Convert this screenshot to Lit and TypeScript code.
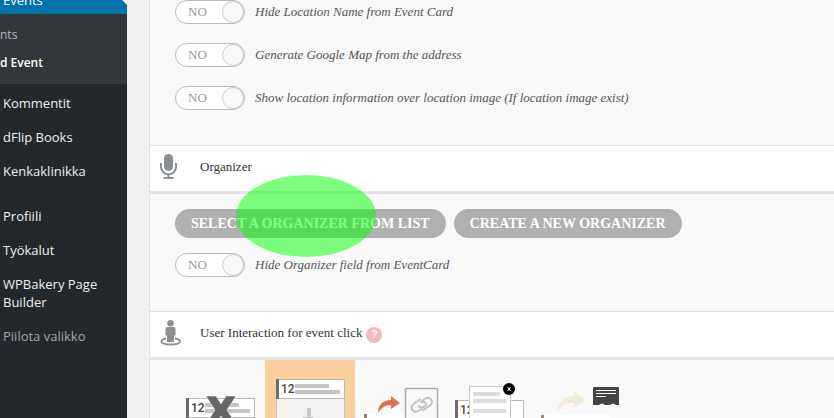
import { LitElement, html, css, svg } from "lit";
import { customElement, property } from "lit/decorators.js";

@customElement("side-menu")
class SideMenu extends LitElement {
  static styles = css`
    :host { display: block; background: #23282d; font: 13px/18px "Open Sans", "Noto Sans", sans-serif; }
    a { display: block; color: #eee; text-decoration: none; }
    .current { position: relative; display: flex; align-items: flex-end; height: 14px; padding: 0 3px; overflow: hidden; background: #0073aa; color: #fff; }
    .text { margin-bottom: 5px; }
    .arrow { position: absolute; top: 0; right: 0; width: 5px; height: 5px; background: #f1f1f1; clip-path: polygon(0 0, 100% 0, 100% 100%); }
    .sub { padding: 7px 0; margin-bottom: 2px; background: #32373c; font-size: 12px; }
    .sub a { padding: 5px 0; color: #b4b9be; }
    .sub .on { color: #fff; font-weight: 600; }
    .item { padding: 8px 3px; }
    .group { padding-bottom: 11px; }
    .fold { color: #a0a5aa; }
  `;
  render() {
    const item = (t: string) => html`<a class="item" href="#">${t}</a>`;
    return html`<nav>
      <a class="current" href="#"><span class="text">Events</span><span class="arrow"></span></a>
      <div class="sub"><a href="#">nts</a><a class="on" href="#">d Event</a></div>
      <div class="group">${["Kommentit", "dFlip Books", "Kenkaklinikka"].map(item)}</div>
      ${["Profiili", "Työkalut"].map(item)}
      <a class="item" href="#">WPBakery Page<br />Builder</a>
      <a class="item fold" href="#">Piilota valikko</a>
    </nav>`;
  }
}

@customElement("toggle-row")
class ToggleRow extends LitElement {
  @property() label = "";
  static styles = css`
    :host { display: block; }
    label { display: flex; align-items: center; gap: 10px; font-size: 13px; font-style: italic; color: #555; }
    .switch { display: flex; flex: none; align-items: center; justify-content: space-between; box-sizing: border-box; width: 70px; height: 24px; padding-left: 12px; border: 1px solid #bbb; border-radius: 12px; background: #fff; color: #999; font-size: 13px; font-style: normal; }
    input { appearance: none; box-sizing: border-box; width: 22px; height: 22px; margin: 0; border: 1px solid #ccc; border-radius: 50%; background: #f9f9f9; }
  `;
  render() {
    return html`<label><span class="switch">NO<input type="checkbox" role="switch" /></span><span>${this.label}</span></label>`;
  }
}

const mic = svg`<svg width="18" height="26" viewBox="0 0 18 26" fill="none" stroke="#8c8f91" stroke-width="2">
  <rect x="4" y="0" width="9" height="17" rx="4.5" fill="#8c8f91" stroke="none"/>
  <path d="M1 9v4a7.5 7.5 0 0 0 15 0V9M8.500 20.500v3M3.500 24h10"/></svg>`;

const person = svg`<svg width="22" height="26" viewBox="0 0 22 26" fill="#8c8f91">
  <circle cx="10.500" cy="3.300" r="3.300"/>
  <path d="M7.500 7h6a2 2 0 0 1 2 2v6.500h-1.500V22H7v-6.500H5.500V9a2 2 0 0 1 2-2z"/>
  <path d="M6 18.500c-7 1.200-6.500 6 4.500 6s12.500-4.800 4.500-6" fill="none" stroke="#8c8f91" stroke-width="1.800"/></svg>`;

const card = (x: number, y: number, h: number) => svg`
  <rect x=${x + 0.5} y=${y + 0.5} width="68" height=${h} fill="#fff" stroke="#b8b8b8"/>
  <rect x=${x} y=${y} width="3" height=${h + 1} fill="#6b6b6b"/>
  <text class="day" x=${x + 5} y=${y + 14}>12</text>`;

const bars = (x: number, y: number) => svg`
  <path d="M${x} ${y}h34v4h-34zM${x} ${y + 6}h45v4h-45z" fill="#c4c4c4"/>`;

const arrow = (x: number, y: number, scale: number, fill: string) => svg`
  <path transform="translate(${x} ${y}) scale(${scale})" fill=${fill} d="M0 17C0 9 5 4 13 4V0L22 7l-9 6V9C7 9 3 12 0 17z"/>`;

const choices = [
  { name: "Do nothing", art: svg`${card(11, 38, 19)}${bars(30, 43)}
    <path d="M31 36h10l5 8 5-8h10l-9 14 9 14H51l-5-8-5 8H31l9-14z" fill="#666" stroke="#fff" stroke-width=".5"/>` },
  { name: "Slide down", art: svg`<rect x="11.500" y="38.500" width="68" height="50" fill="#f3f3f3" stroke="#c4c4c4"/>
    ${card(11, 19, 19)}${bars(30, 24)}<path d="M42 48h4v9h3l-5 7-6-7h4z" fill="#c8c8c8"/>` },
  { name: "External link", art: svg`<rect x="9" y="54" width="50" height="30" fill="#fff"/>
    <rect x="9" y="54" width="3" height="30" fill="#a87861"/>
    ${arrow(23, 36, 1, "#d87550")}
    <rect x="50.500" y="28.500" width="32" height="40" rx="1" fill="#f9f9f9" stroke="#aaa" stroke-width="1.500"/>
    <g fill="none" stroke="#c2c2c2" stroke-width="2" stroke-linecap="round">
      <path d="M65 39.500l-6.500 4.500a4 4 0 0 0 4.500 7l3.500-2M63.500 46a4 4 0 0 0 5 1l2-1.500"/>
      <path d="M67.500 50.500l7.500-5a4 4 0 0 0-4.500-7l-3.500 2.500M71 44a4 4 0 0 0-5-2"/></g>` },
  { name: "Lightbox", art: svg`${card(10, 40, 19)}
    <rect x="24.500" y="26.500" width="41" height="60" fill="#fff" stroke="#c6c6c6"/>
    <path d="M28 32h27v4H28zM28 39h33v4H28zM28 49h33v4H28z" fill="#dcdcdc"/>
    <circle cx="64" cy="29" r="6" fill="#000"/>
    <path d="M62.500 27l3 4M65.500 27l-3 4" stroke="#fff"/>` },
  { name: "Single event page", art: svg`<rect x="6" y="55" width="69" height="30" rx="2" fill="#fff"/>
    <rect x="6" y="55" width="3" height="30" fill="#a38a78"/>
    ${arrow(22, 31, 1.3, "#f1ebdc")}
    <path d="M59 27h24q1 0 1 1v17h-3q-3-3-6 0h-5q-3-3-6 0h-6V28q0-1 1-1z" fill="#444"/>
    <path d="M61 30.500h20M61 33.500h20M61 36.500h10" stroke="#fff"/>` },
];

@customElement("app-root")
class AppRoot extends LitElement {
  static styles = css`
    :host { display: grid; grid-template-columns: 127px 1fr; gap: 22px; height: 100vh; overflow: hidden; background: #f1f1f1; color: #333; font: 13px/18px "Liberation Serif", serif; }
    main { border-left: 1px solid #e1e1e1; background: #f9f9f9; }
    header { display: flex; align-items: center; box-sizing: border-box; height: 49px; padding: 0 0 4px 10px; border-top: 1px solid #e1e1e1; border-bottom: 3px solid #e4e4e4; background: #fff; }
    .icon { display: flex; width: 40px; }
    h2 { margin: 0; font: inherit; }
    .rows { display: flex; flex-direction: column; gap: 19px; padding: 0 25px 35px; }
    .organizer { gap: 15px; padding: 15px 25px 34px; }
    .actions { position: relative; display: flex; gap: 8px; }
    .actions button { height: 29px; padding: 0 16px; border: 0; border-radius: 15px; background: #b0b0b0; color: #fff; font: bold 14px/18px "Liberation Serif", serif; white-space: nowrap; }
    .marker { position: absolute; left: 61px; top: -34px; width: 140px; height: 82px; border-radius: 50%; background: rgba(0, 255, 0, 0.5); pointer-events: none; }
    .help { width: 16px; height: 16px; margin: 4px 0 0 4px; padding: 0; border: 0; border-radius: 50%; background: #f9b9bb; color: #fff; font: bold 10px/16px "Liberation Sans", sans-serif; }
    .choices { display: flex; margin: 0; padding: 0 25px; border: 0; }
    .choice { position: relative; width: 90px; height: 100px; }
    .choice:has(input:checked) { background: #f9d09b; }
    .choice input { position: absolute; opacity: 0; }
    .day { fill: #444; font: 500 12px Roboto, sans-serif; }
  `;
  render() {
    return html`
      <side-menu></side-menu>
      <main>
        <section class="rows">
          <toggle-row label="Hide Location Name from Event Card"></toggle-row>
          <toggle-row label="Generate Google Map from the address"></toggle-row>
          <toggle-row label="Show location information over location image (If location image exist)"></toggle-row>
        </section>
        <header><span class="icon">${mic}</span><h2>Organizer</h2></header>
        <section class="rows organizer">
          <div class="actions">
            <button>SELECT A ORGANIZER FROM LIST</button>
            <button>CREATE A NEW ORGANIZER</button>
            <span class="marker"></span>
          </div>
          <toggle-row label="Hide Organizer field from EventCard"></toggle-row>
        </section>
        <header><span class="icon">${person}</span><h2>User Interaction for event click</h2><button class="help">?</button></header>
        <fieldset class="choices">
          ${choices.map((c, i) => html`<label class="choice"><input type="radio" name="click" aria-label=${c.name} ?checked=${i === 1} /><svg width="90" height="100" viewBox="0 0 90 100">${c.art}</svg></label>`)}
        </fieldset>
      </main>`;
  }
}
